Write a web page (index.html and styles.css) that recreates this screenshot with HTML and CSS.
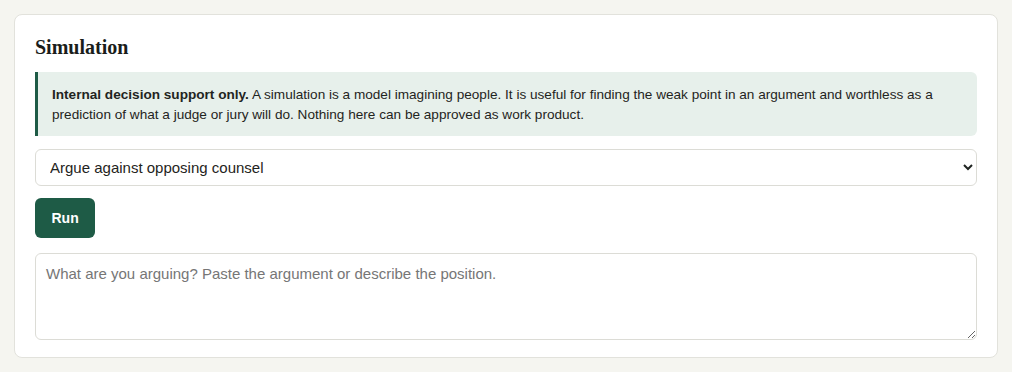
FILE: index.html
```html
<!DOCTYPE html>
<html lang="en">
<head>
<meta charset="utf-8">
<title>Simulation</title>
<link rel="stylesheet" href="styles.css">
</head>
<body>
<section class="card">
  <h2 class="card-title">Simulation</h2>
  <div class="callout">
    <strong>Internal decision support only.</strong> A simulation is a model imagining people. It is useful for finding the weak point in an argument and worthless as a prediction of what a judge or jury will do. Nothing here can be approved as work product.
  </div>
  <select class="mode-select">
    <option>Argue against opposing counsel</option>
    <option>Argue before a judge</option>
    <option>Present to a jury</option>
  </select>
  <div class="actions">
    <button class="run-btn" type="button">Run</button>
  </div>
  <textarea class="prompt" placeholder="What are you arguing? Paste the argument or describe the position."></textarea>
</section>
</body>
</html>
```
FILE: styles.css
```css
html, body {
  margin: 0;
  padding: 0;
}
body {
  background: #f5f5f0;
  padding: 14px;
  font-family: "Liberation Sans", Arial, sans-serif;
  color: #1f2421;
}
.card {
  background: #ffffff;
  border: 1px solid #e2e2dc;
  border-radius: 8px;
  padding: 20px 20px 17px;
  display: flex;
  flex-direction: column;
}
.card-title {
  margin: 0 0 13px;
  font-family: "Liberation Serif", "Times New Roman", serif;
  font-weight: 700;
  font-size: 20px;
  line-height: 24px;
  color: #1a1d1b;
}
.callout {
  background: #e7f0eb;
  border-left: 3px solid #1e5b46;
  border-radius: 0 6px 6px 0;
  padding: 13px 14px 11px;
  font-size: 13.6px;
  line-height: 20px;
  color: #1f2421;
}
.callout strong {
  font-weight: 700;
}
.mode-select {
  margin-top: 13px;
  height: 37px;
  padding: 0 10px;
  border: 1px solid #dcdcd6;
  border-radius: 6px;
  background: #ffffff;
  font-family: "Liberation Sans", Arial, sans-serif;
  font-size: 15px;
  color: #1f2421;
}
.actions {
  margin-top: 12px;
  display: flex;
}
.run-btn {
  height: 40px;
  padding: 0 16.5px;
  border: none;
  border-radius: 6px;
  background: #1e5b46;
  color: #ffffff;
  font-family: "Liberation Sans", Arial, sans-serif;
  font-size: 14px;
  font-weight: 700;
  cursor: pointer;
}
.prompt {
  display: block;
  margin-top: 15px;
  height: 87px;
  box-sizing: border-box;
  padding: 10px;
  border: 1px solid #dcdcd6;
  border-radius: 6px;
  font-family: "Liberation Sans", Arial, sans-serif;
  font-size: 15px;
  line-height: 20px;
  color: #1f2421;
  resize: vertical;
}
.prompt::placeholder {
  color: #767676;
}
```
